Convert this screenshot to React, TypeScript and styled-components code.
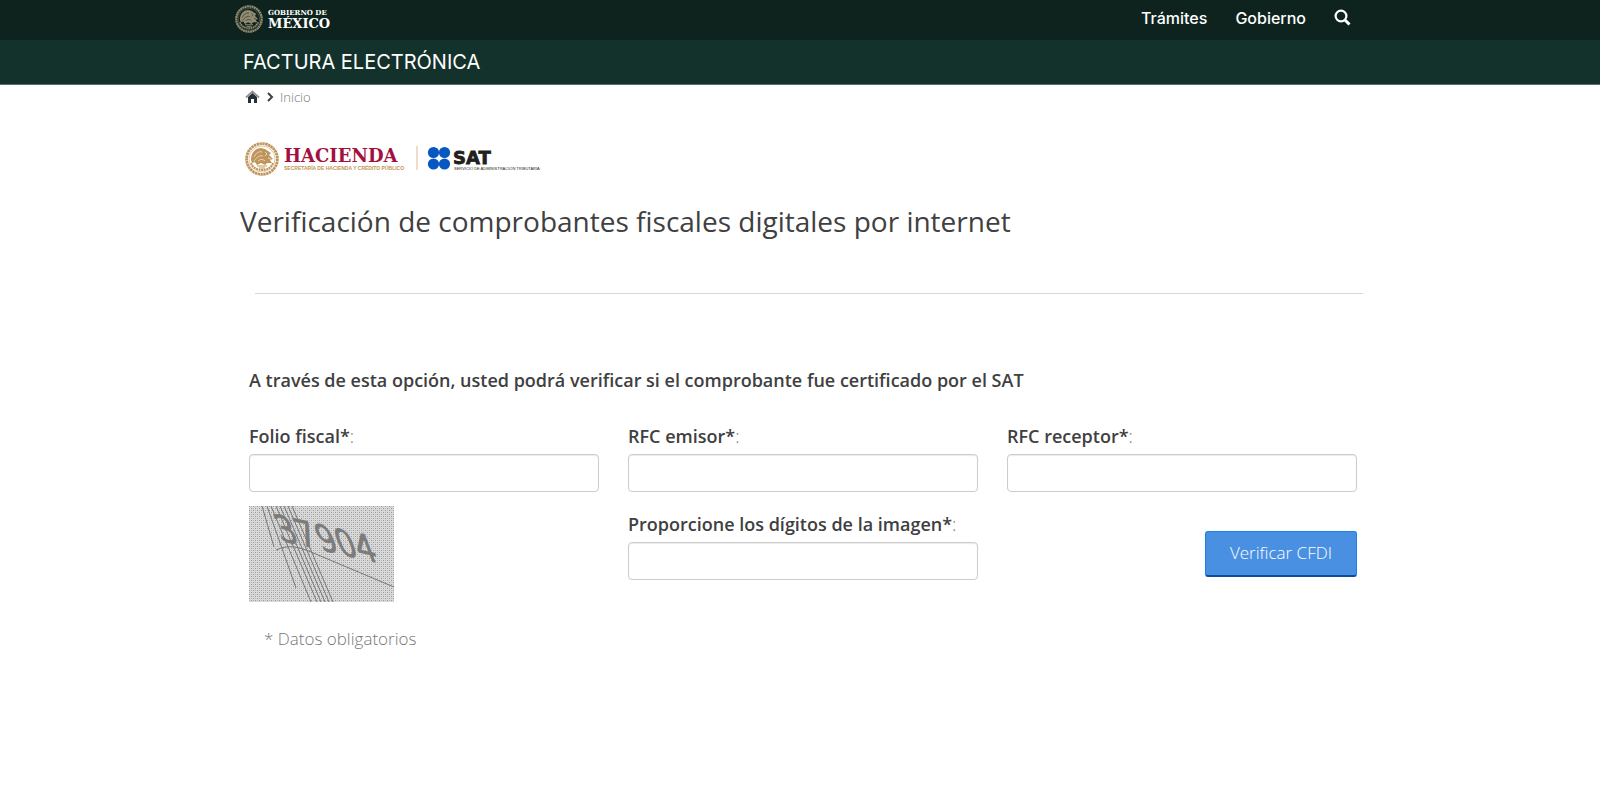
import React from "react";
import styled, { createGlobalStyle } from "styled-components";

const GlobalStyle = createGlobalStyle`
  * { box-sizing: border-box; }
  body {
    margin: 0;
    background: #fff;
    color: #404041;
    font-family: "Open Sans", "Noto Sans", sans-serif;
    font-size: 17px;
    font-weight: 300;
    line-height: 24px;
  }
`;

const Container = styled.div`
  max-width: 1130px;
  margin: 0 auto;
`;

const TopBar = styled.header`
  background: #0e231e;
`;

const TopBarInner = styled(Container)`
  display: flex;
  align-items: center;
  justify-content: space-between;
  height: 40px;
`;

const TopNav = styled.nav`
  display: flex;
  align-items: center;
  gap: 28px;
  padding: 0 14px 4px 0;
`;

const NavLink = styled.a`
  display: flex;
  color: #fff;
  font-family: Inter, sans-serif;
  font-size: 16px;
  font-weight: 500;
  text-decoration: none;
`;

const SubBar = styled.div`
  background: #13322b;
  border-bottom: 1px solid #5f706c;
`;

const SubTitle = styled.a`
  display: block;
  padding: 0 8px;
  color: #fff;
  font-family: Inter, sans-serif;
  font-size: 20px;
  font-weight: 400;
  line-height: 44px;
  text-decoration: none;
`;

const Breadcrumb = styled.nav`
  display: flex;
  align-items: center;
  gap: 6px;
  height: 24px;
  padding-left: 10px;
  font-size: 13px;
`;

const Crumb = styled.a`
  display: flex;
  color: #777;
  text-decoration: none;
`;

const Logos = styled.div`
  display: flex;
  margin-top: 31px;
  padding-left: 8px;
`;

const Heading = styled.h1`
  margin: 23px 0 52px;
  padding-left: 5px;
  font-size: 28px;
  font-weight: 500;
  line-height: 40px;
`;

const Divider = styled.hr`
  margin: 0 2px 0 20px;
  border: 0;
  border-top: 1px solid #d6d6d6;
`;

const Form = styled.form`
  display: grid;
  grid-template-columns: repeat(3, 1fr);
  gap: 14px 29px;
  padding: 74px 8px 0 14px;
`;

const Intro = styled.p`
  grid-column: 1 / -1;
  margin: 0 0 18px;
  font-size: 18px;
  font-weight: 600;
`;

const Field = styled.div<{ $spaced?: boolean }>`
  display: flex;
  flex-direction: column;
  gap: 6px;
  padding-top: ${({ $spaced }) => ($spaced ? "6px" : "0")};
`;

const Label = styled.label`
  color: #777;
  font-size: 18px;
`;

const Strong = styled.strong`
  color: #404041;
  font-weight: 600;
`;

const TextInput = styled.input`
  width: 100%;
  height: 38px;
  padding: 6px 12px;
  border: 1px solid #ccc;
  border-radius: 4px;
  background: #fff;
  font: inherit;
  box-shadow: inset 0 1px 1px rgba(0, 0, 0, 0.08);
`;

const SubmitCell = styled.div`
  display: flex;
  justify-content: flex-end;
  align-items: flex-start;
  padding-top: 25px;
`;

const SubmitButton = styled.button`
  height: 46px;
  padding: 0 24px 2px;
  border: 1px solid #1b80e0;
  border-bottom: 2px solid #0c4da2;
  border-radius: 3px;
  background: #4a90e2;
  color: #fff;
  font: inherit;
`;

const Required = styled.p`
  margin: 25px 0 0;
  padding-left: 29px;
  color: #777;
`;

type EmblemProps = { cx: number; cy: number; r: number; color: string; ground: string };

function Emblem({ cx, cy, r, color, ground }: EmblemProps) {
  return (
    <g transform={`translate(${cx} ${cy}) scale(${r / 17})`}>
      <circle r="15.4" fill="none" stroke={color} strokeWidth="2.8" strokeDasharray="2.4 0.5" />
      <circle r="13" fill="none" stroke={color} strokeWidth="0.5" />
      <path
        d="M-11 1C-11 -7 -6 -11 -1 -11L3 -10L6 -8L9 -6L7 -4L11 0L8 1L10 4L5 4L3 6L-1 4L-5 6L-7 3L-10 4Z"
        fill={color}
      />
      <path
        d="M-8 -2C-6 -6 -3 -8 0 -7M-8 2C-5 -2 -2 -4 1 -3M-4 2C-2 0 1 0 3 2M3 -7L5 -5L3 -3M6 -1L9 0"
        fill="none"
        stroke={ground}
        strokeWidth="0.6"
      />
      <path d="M-11 4C-9 9 -5 11 0 11C5 11 9 9 11 4" fill="none" stroke={color} strokeWidth="2" strokeDasharray="2 0.6" />
      <path d="M-5 7H5M-3 9H3" stroke={color} strokeWidth="1.2" />
    </g>
  );
}

function GobMexLogo() {
  return (
    <svg width="98" height="30" viewBox="0 0 98 30" role="img" aria-label="Gobierno de México">
      <Emblem cx={14} cy={14} r={14} color="#8f8a70" ground="#0e231e" />
      <g fill="#fff" fontFamily="'DejaVu Serif', serif" fontWeight="700">
        <text x="33" y="10" fontSize="7">GOBIERNO DE</text>
        <text x="33" y="23" fontSize="13">MÉXICO</text>
      </g>
    </svg>
  );
}

function HaciendaSatLogo() {
  return (
    <svg width="310" height="38" viewBox="0 0 310 38" role="img" aria-label="Hacienda y SAT">
      <Emblem cx={19} cy={19} r={17} color="#bf955a" ground="#fff" />
      <text x="41" y="22" fill="#a50f3e" fontFamily="'DejaVu Serif', serif" fontWeight="700" fontSize="18">
        HACIENDA
      </text>
      <text x="41" y="30" fill="#bf955a" fontFamily="'Liberation Sans', sans-serif" fontWeight="700" fontSize="5">
        SECRETARÍA DE HACIENDA Y CRÉDITO PÚBLICO
      </text>
      <path d="M174 6V30" stroke="#d9bd97" />
      <g fill="#0757c2">
        <circle cx="190.5" cy="12.5" r="5.6" />
        <circle cx="201.5" cy="12.5" r="5.6" />
        <circle cx="190.5" cy="24" r="5.6" />
        <circle cx="201.5" cy="24" r="5.6" />
      </g>
      <g fill="#231f20">
        <text x="210" y="24" fontFamily="'DejaVu Sans', sans-serif" fontWeight="700" fontSize="18" stroke="#231f20" strokeWidth="0.8">
          SAT
        </text>
        <text x="211" y="30" fontFamily="'Liberation Sans', sans-serif" fontSize="4">
          SERVICIO DE ADMINISTRACIÓN TRIBUTARIA
        </text>
      </g>
    </svg>
  );
}

function Captcha() {
  return (
    <svg width="145" height="96" viewBox="0 0 145 96" role="img" aria-label="37904">
      <defs>
        <pattern id="grain" width="4" height="4" patternUnits="userSpaceOnUse">
          <rect width="4" height="4" fill="#d9d9d9" />
          <path d="M0 0h1v1h-1zM2 2h1v1h-1z" fill="#9a9a9a" />
          <path d="M2 0h1v1h-1zM0 2h1v1h-1z" fill="#bcbcbc" />
        </pattern>
      </defs>
      <rect width="145" height="96" fill="url(#grain)" />
      <g fill="none" stroke="#777">
        <path d="M13 0L25 41M18 0L47 82M22 0L62 96M27 0L68 96M31 0L72 96M35 0L76 96M39 0L80 96M43 0L84 96" />
        <path d="M27 44C40 38 50 41 62 46L145 81" />
      </g>
      <text
        transform="translate(32 34) rotate(13) skewX(34)"
        fill="#7c7c7c"
        stroke="#7c7c7c"
        strokeWidth="2"
        fontFamily="'DejaVu Sans', sans-serif"
        fontSize="32"
      >
        37904
      </text>
    </svg>
  );
}

type FormFieldProps = { id: string; label: string; spaced?: boolean };

function FormField({ id, label, spaced }: FormFieldProps) {
  return (
    <Field $spaced={spaced}>
      <Label htmlFor={id}>
        <Strong>{label}*</Strong>:
      </Label>
      <TextInput id={id} type="text" />
    </Field>
  );
}

export default function App() {
  return (
    <>
      <GlobalStyle />
      <TopBar>
        <TopBarInner>
          <GobMexLogo />
          <TopNav>
            <NavLink href="#tramites">Trámites</NavLink>
            <NavLink href="#gobierno">Gobierno</NavLink>
            <NavLink href="#buscar" aria-label="Buscar">
              <svg width="17" height="19" viewBox="0 0 17 19" fill="none" stroke="#fff">
                <circle cx="7" cy="7" r="5.4" strokeWidth="2.2" />
                <path d="M10.5 10.5L15.5 15.5" strokeWidth="3" />
              </svg>
            </NavLink>
          </TopNav>
        </TopBarInner>
      </TopBar>
      <SubBar>
        <Container>
          <SubTitle href="#factura">FACTURA ELECTRÓNICA</SubTitle>
        </Container>
      </SubBar>
      <Container as="main">
        <Breadcrumb aria-label="Ruta">
          <Crumb href="#inicio" aria-label="Portada">
            <svg width="15" height="14" viewBox="0 0 15 14">
              <path d="M3 7L7.5 3L12 7V13H9V9H6V13H3Z" fill="#26303a" />
              <path d="M1 7.5L7.5 1.5L14 7.5" fill="none" stroke="#8f8f8f" strokeWidth="1.8" />
            </svg>
          </Crumb>
          <svg width="8" height="10" viewBox="0 0 8 10" fill="none" stroke="#404041" strokeWidth="2">
            <path d="M2 1L6 5L2 9" />
          </svg>
          <Crumb href="#inicio">Inicio</Crumb>
        </Breadcrumb>
        <Logos>
          <HaciendaSatLogo />
        </Logos>
        <Heading>Verificación de comprobantes fiscales digitales por internet</Heading>
        <Divider />
        <Form onSubmit={(event: React.FormEvent) => event.preventDefault()}>
          <Intro>A través de esta opción, usted podrá verificar si el comprobante fue certificado por el SAT</Intro>
          <FormField id="folio" label="Folio fiscal" />
          <FormField id="emisor" label="RFC emisor" />
          <FormField id="receptor" label="RFC receptor" />
          <Captcha />
          <FormField id="digitos" label="Proporcione los dígitos de la imagen" spaced />
          <SubmitCell>
            <SubmitButton type="submit">Verificar CFDI</SubmitButton>
          </SubmitCell>
        </Form>
        <Required>* Datos obligatorios</Required>
      </Container>
    </>
  );
}
